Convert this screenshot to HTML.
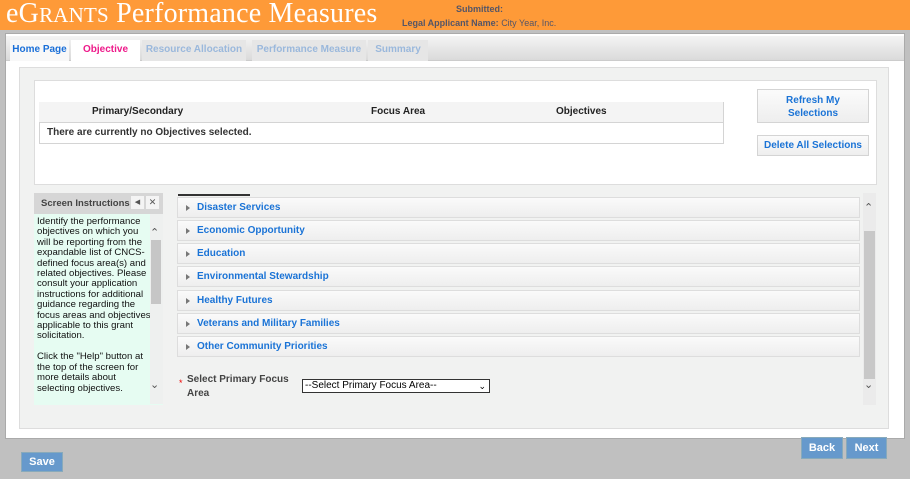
<!DOCTYPE html>
<html><head><style>
*{margin:0;padding:0;box-sizing:border-box}
body{width:910px;height:479px;background:#c0c0c0;position:relative;overflow:hidden;font-family:"Liberation Sans",Arial,sans-serif;font-size:11px}
.a{position:absolute}
.hdr{left:0;top:0;width:910px;height:30px;background:#fe9a38}
.title{left:6px;top:-2px;font-family:"Liberation Serif",serif;color:#fff;font-size:28px;white-space:nowrap;letter-spacing:0.2px}
.title small{font-size:21px}
.sub{font-size:9px;font-weight:bold;color:#556}
.panel{left:5px;top:33px;width:900px;height:406px;background:#fff;border:1px solid #aaa}
.tabbar{left:6px;top:36px;width:898px;height:25px;background:linear-gradient(#f4f4f4,#dadada);border-bottom:1px solid #ccc}
.tab{top:40px;height:21px;font-size:10px;font-weight:bold;text-align:center;line-height:20px;background:#e6e6e6;color:#9ab8dc}
.inner{left:19px;top:67px;width:870px;height:362px;border:1px solid #ddd;background:#f1f2f1}
.box{left:34px;top:80px;width:843px;height:105px;background:#fff;border:1px solid #ddd}
.tbl{left:39px;top:102px;width:685px;height:42px;border:1px solid #d4d4d4;background:#fff}
.th{top:102px;height:21px;line-height:20px;background:#f4f4f4;border-right:1px solid #d4d4d4;border-bottom:1px solid #d4d4d4;font-weight:bold;font-size:10px;color:#222;padding-left:8px}
.btn{background:linear-gradient(#fbfbfb,#eee);border:1px solid #d4d4d4;color:#1a73d6;font-weight:bold;font-size:10px;text-align:center}
.ins{left:34px;top:193px;width:129px;height:212px;background:#e6fcf2}
.acc{left:177px;width:683px;height:21px;border:1px solid #ddd;background:linear-gradient(#fafafa,#eee);color:#1a73d6;font-weight:bold;font-size:10px;line-height:20px;padding-left:19px}
.acc:before{content:"";position:absolute;left:8px;top:7px;border-left:4px solid #777;border-top:3px solid transparent;border-bottom:3px solid transparent}
.blue{background:#6699cc;color:#fff;font-weight:bold;font-size:11px;text-align:center;border:1px solid #8ab}
</style></head><body>
<div class="a hdr"></div>
<div class="a title">e<span>G</span><small>RANTS</small> Performance Measures</div>
<div class="a sub" style="left:456px;top:4px">Submitted:</div>
<div class="a sub" style="left:402px;top:18px">Legal Applicant Name: <span style="font-weight:normal">City Year, Inc.</span></div>
<div class="a panel"></div>
<div class="a tabbar"></div>
<div class="a tab" style="left:10px;width:59px;background:#f8f8f8;color:#1a6fd8">Home Page</div>
<div class="a tab" style="left:71px;width:69px;background:#fff;color:#ee1a8a;height:22px">Objective</div>
<div class="a tab" style="left:142px;width:104px">Resource Allocation</div>
<div class="a tab" style="left:252px;width:114px">Performance Measure</div>
<div class="a tab" style="left:368px;width:60px">Summary</div>
<div class="a inner"></div>
<div class="a box"></div>
<div class="a tbl"></div>
<div class="a th" style="left:39px;width:46px"></div>
<div class="a th" style="left:84px;width:280px">Primary/Secondary</div>
<div class="a th" style="left:363px;width:186px">Focus Area</div>
<div class="a th" style="left:548px;width:176px;border-right:1px solid #d4d4d4">Objectives</div>
<div class="a" style="left:47px;top:127px;font-size:10px;font-weight:bold;color:#333">There are currently no Objectives selected.</div>
<div class="a btn" style="left:757px;top:89px;width:112px;height:34px;padding-top:4px;line-height:13px">Refresh My<br>Selections</div>
<div class="a btn" style="left:757px;top:135px;width:112px;height:21px;line-height:19px">Delete All Selections</div>
<div class="a ins"></div>
<div class="a" style="left:34px;top:193px;width:129px;height:21px;background:#d6d6d6;font-weight:bold;font-size:9.5px;color:#444;line-height:21px;padding-left:7px">Screen Instructions</div>
<div class="a" style="left:131px;top:196px;width:13px;height:13px;background:#f4f4f4;font-size:7px;text-align:center;line-height:13px;color:#555">◀</div>
<div class="a" style="left:146px;top:196px;width:13px;height:13px;background:#f4f4f4;font-size:9px;text-align:center;line-height:13px;color:#555">✕</div>
<div class="a" style="left:37px;top:217px;white-space:nowrap;font-size:9.6px;line-height:10.4px;color:#111">Identify the performance<br>objectives on which you<br>will be reporting from the<br>expandable list of CNCS-<br>defined focus area(s) and<br>related objectives. Please<br>consult your application<br>instructions for additional<br>guidance regarding the<br>focus areas and objectives<br>applicable to this grant<br>solicitation.<br><br>Click the "Help" button at<br>the top of the screen for<br>more details about<br>selecting objectives.</div>
<div class="a" style="left:150px;top:214px;width:13px;height:190px;background:#eef0ef"></div>
<div class="a" style="left:151px;top:240px;width:10px;height:64px;background:#c6c6c6"></div>
<div class="a" style="left:150px;top:226px;font-size:11px;color:#555">⌃</div>
<div class="a" style="left:150px;top:378px;font-size:11px;color:#555">⌄</div>
<div class="a" style="left:178px;top:194px;width:72px;height:2px;background:#333"></div>
<div class="a acc" style="top:197px">Disaster Services</div>
<div class="a acc" style="top:220px">Economic Opportunity</div>
<div class="a acc" style="top:243px">Education</div>
<div class="a acc" style="top:266px">Environmental Stewardship</div>
<div class="a acc" style="top:290px">Healthy Futures</div>
<div class="a acc" style="top:313px">Veterans and Military Families</div>
<div class="a acc" style="top:336px">Other Community Priorities</div>
<div class="a" style="left:179px;top:378px;color:#e00;font-size:9px">*</div>
<div class="a" style="left:187px;top:373px;font-size:10px;font-weight:bold;color:#444;line-height:14px;width:115px">Select Primary Focus<br>Area</div>
<div class="a" style="left:302px;top:379px;width:188px;height:14px;border:1px solid #333;background:#fff;font-size:10px;line-height:12px;padding-left:2px">--Select Primary Focus Area--<span style="position:absolute;right:3px;top:0;font-size:9px">⌄</span></div>
<div class="a" style="left:863px;top:193px;width:13px;height:212px;background:#ebebeb"></div>
<div class="a" style="left:864px;top:231px;width:11px;height:148px;background:#c8c8c8"></div>
<div class="a" style="left:864px;top:201px;font-size:11px;color:#555">⌃</div>
<div class="a" style="left:864px;top:378px;font-size:11px;color:#555">⌄</div>
<div class="a blue" style="left:801px;top:437px;width:42px;height:22px;line-height:20px">Back</div>
<div class="a blue" style="left:846px;top:437px;width:41px;height:22px;line-height:20px">Next</div>
<div class="a blue" style="left:21px;top:452px;width:42px;height:20px;line-height:18px">Save</div>
</body></html>
